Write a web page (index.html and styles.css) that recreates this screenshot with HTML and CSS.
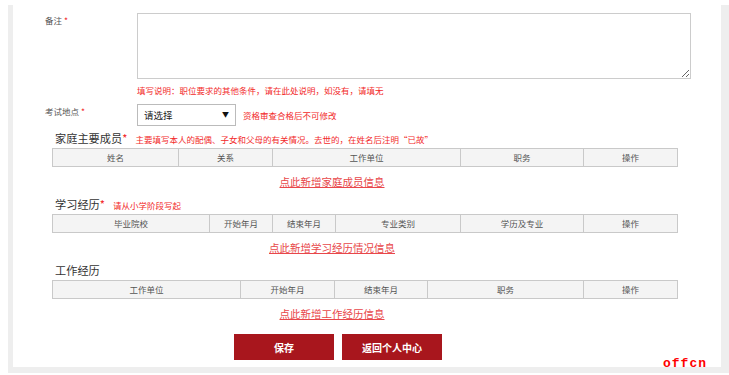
FILE: index.html
```html
<!DOCTYPE html>
<html lang="zh-CN">
<head>
    <meta charset="UTF-8">
    <meta name="viewport" content="width=device-width, initial-scale=1.0">
    <title>报名信息</title>
    <link rel="stylesheet" href="styles.css">
</head>
<body>

<div class="frame">
    <div class="panel">
        <div class="form-row remark-row">
            <label class="field-label">备注 <span class="req">*</span></label>
            <div class="field">
                <textarea class="remark"></textarea>
                <p class="hint">填写说明：职位要求的其他条件，请在此处说明，如没有，请填无</p>
            </div>
        </div>

        <div class="form-row place-row">
            <label class="field-label">考试地点 <span class="req">*</span></label>
            <div class="select-wrap">
                <select class="place-select">
                    <option>请选择</option>
                </select>
            </div>
            <span class="inline-hint">资格审查合格后不可修改</span>
        </div>

        <div class="section">
            <h3 class="section-title">家庭主要成员<span class="req">*</span><span class="note">主要填写本人的配偶、子女和父母的有关情况。去世的，在姓名后注明“已故”</span></h3>
            <table class="grid">
                <colgroup>
                    <col style="width:126px">
                    <col style="width:94px">
                    <col style="width:188px">
                    <col style="width:123px">
                    <col>
                </colgroup>
                <tr>
                    <th>姓名</th>
                    <th>关系</th>
                    <th>工作单位</th>
                    <th>职务</th>
                    <th>操作</th>
                </tr>
            </table>
            <div class="add-row"><a href="#">点此新增家庭成员信息</a></div>
        </div>

        <div class="section">
            <h3 class="section-title">学习经历<span class="req">*</span><span class="note">请从小学阶段写起</span></h3>
            <table class="grid">
                <colgroup>
                    <col style="width:157px">
                    <col style="width:63px">
                    <col style="width:63px">
                    <col style="width:125px">
                    <col style="width:123px">
                    <col>
                </colgroup>
                <tr>
                    <th>毕业院校</th>
                    <th>开始年月</th>
                    <th>结束年月</th>
                    <th>专业类别</th>
                    <th>学历及专业</th>
                    <th>操作</th>
                </tr>
            </table>
            <div class="add-row"><a href="#">点此新增学习经历情况信息</a></div>
        </div>

        <div class="section">
            <h3 class="section-title">工作经历</h3>
            <table class="grid">
                <colgroup>
                    <col style="width:188px">
                    <col style="width:94px">
                    <col style="width:93px">
                    <col style="width:156px">
                    <col>
                </colgroup>
                <tr>
                    <th>工作单位</th>
                    <th>开始年月</th>
                    <th>结束年月</th>
                    <th>职务</th>
                    <th>操作</th>
                </tr>
            </table>
            <div class="add-row"><a href="#">点此新增工作经历信息</a></div>
        </div>

        <div class="actions">
            <button class="btn">保存</button>
            <button class="btn">返回个人中心</button>
        </div>

        <span class="watermark">offcn</span>
    </div>
</div>

</body>
</html>
```

FILE: styles.css
```css
:root {
    --red: #f22a2a;
    --link-red: #e8474a;
    --dark-red: #a8161d;
    --border: #c9c9c9;
    --label: #555;
    --font: "Microsoft YaHei", "Noto Sans CJK SC", sans-serif;
}

body {
    margin: 0;
    font-family: var(--font);
    color: #333;
    background: #fff;
}

.frame {
    margin: 5px 0 0 8px;
    padding: 0 8px 6px 5px;
    background: #eee;
}

.panel {
    position: relative;
    background: #fff;
    height: 362px;
    padding-top: 8px;
    box-sizing: border-box;
}

.form-row {
    display: flex;
    padding-left: 32px;
}

.field-label {
    width: 92px;
    font-size: 8.5px;
    color: var(--label);
    line-height: 12px;
}

.req {
    color: var(--red);
}

.remark-row .field-label {
    padding-top: 1px;
}

.remark {
    display: block;
    width: 554px;
    height: 66px;
    margin: 0;
    border: 1px solid #ccc;
    box-sizing: border-box;
    font-family: var(--font);
}

.hint {
    margin: 5px 0 0;
    font-size: 8.5px;
    line-height: 12px;
    color: var(--red);
}

.place-row {
    margin-top: 8px;
    height: 22px;
    align-items: center;
}

.place-row .field-label {
    align-self: flex-start;
    padding-top: 1px;
}

.select-wrap {
    position: relative;
    width: 99px;
    height: 22px;
}

.select-wrap::after {
    content: "▼";
    position: absolute;
    right: 7px;
    top: 6px;
    font-size: 7px;
    line-height: 9px;
    color: #111;
    pointer-events: none;
}

.place-select {
    display: block;
    appearance: none;
    width: 100%;
    height: 100%;
    border: 1px solid #bbb;
    border-radius: 0;
    background: #fff;
    padding: 0 6px;
    font-family: var(--font);
    font-size: 9.5px;
    color: #222;
}

.inline-hint {
    margin-left: 7px;
    font-size: 8.5px;
    color: var(--red);
}

.section {
    margin-top: 5px;
}

.place-row + .section {
    margin-top: 3px;
}

.section-title {
    height: 18px;
    margin: 0 0 1px 42px;
    font-size: 11.2px;
    font-weight: normal;
    line-height: 18px;
    color: #333;
}

.section-title .note {
    margin-left: 8px;
    font-size: 8.5px;
    line-height: 10px;
    color: var(--red);
}

.grid {
    margin-left: 39px;
    width: 626px;
    border-collapse: collapse;
    table-layout: fixed;
}

.grid th {
    height: 17px;
    padding: 0;
    border: 1px solid var(--border);
    background: #f4f4f4;
    font-size: 8.5px;
    font-weight: normal;
    line-height: 17px;
    color: var(--label);
}

.add-row {
    width: 638px;
    height: 16px;
    margin-top: 7px;
    text-align: center;
    font-size: 10.5px;
    line-height: 16px;
}

.add-row a {
    color: var(--link-red);
}

.actions {
    display: flex;
    justify-content: center;
    gap: 8px;
    width: 650px;
    margin-top: 12px;
}

.btn {
    width: 100px;
    height: 26px;
    border: none;
    background: var(--dark-red);
    color: #fff;
    font-family: var(--font);
    font-size: 10px;
    font-weight: bold;
    cursor: pointer;
}

.watermark {
    position: absolute;
    left: 650px;
    bottom: -3px;
    font-family: "Liberation Mono", monospace;
    font-size: 13px;
    line-height: 13px;
    letter-spacing: 1px;
    font-weight: bold;
    color: #f00;
}
```
